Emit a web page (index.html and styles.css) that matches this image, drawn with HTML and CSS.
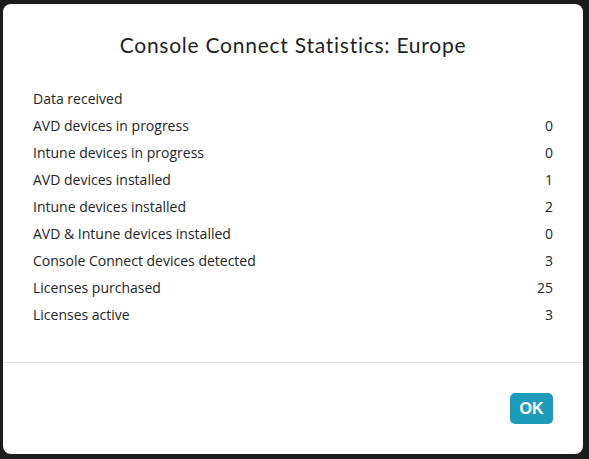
FILE: index.html
```html
<!DOCTYPE html>
<html>
<head>
<meta charset="utf-8">
<link rel="stylesheet" href="styles.css">
</head>
<body>
<div class="modal">
  <div class="modal-header">
    <h1 class="modal-title">Console Connect Statistics: Europe</h1>
  </div>
  <div class="modal-body">
    <div class="row"><span>Data received</span><span></span></div>
    <div class="row"><span>AVD devices in progress</span><span>0</span></div>
    <div class="row"><span>Intune devices in progress</span><span>0</span></div>
    <div class="row"><span>AVD devices installed</span><span>1</span></div>
    <div class="row"><span>Intune devices installed</span><span>2</span></div>
    <div class="row"><span>AVD &amp; Intune devices installed</span><span>0</span></div>
    <div class="row"><span>Console Connect devices detected</span><span>3</span></div>
    <div class="row"><span>Licenses purchased</span><span>25</span></div>
    <div class="row"><span>Licenses active</span><span>3</span></div>
  </div>
  <div class="modal-footer">
    <button class="btn-ok">OK</button>
  </div>
</div>
</body>
</html>
```
FILE: styles.css
```css
html, body {
  margin: 0;
  padding: 0;
  background: #1c1c1c;
  height: 100%;
}
body {
  padding: 4px 6px 5px 3px;
  box-sizing: border-box;
}
.modal {
  width: 580px;
  height: 450px;
  background: #ffffff;
  border-radius: 8px;
  display: flex;
  flex-direction: column;
  font-family: "Open Sans", "Liberation Sans", sans-serif;
  color: #212529;
}
.modal-header {
  padding: 26px 20px 0;
}
.modal-title {
  margin: 0;
  text-align: center;
  font-family: "Lato", "Open Sans", sans-serif;
  font-weight: 400;
  font-size: 21px;
  letter-spacing: 0.75px;
  line-height: 30px;
  color: #1f1f1f;
}
.modal-body {
  padding: 25px 30px 0;
  flex: 0 0 auto;
}
.row {
  display: flex;
  justify-content: space-between;
  font-size: 14px;
  line-height: 27px;
}
.modal-footer {
  margin-top: auto;
  border-top: 1px solid #e5e9ee;
  padding: 30px 30px 30px;
  display: flex;
  justify-content: flex-end;
}
.btn-ok {
  width: 43px;
  height: 31px;
  border: none;
  border-radius: 5px;
  background: #1e9bb8;
  color: #ffffff;
  font-family: "Liberation Sans", Arial, sans-serif;
  font-weight: 700;
  font-size: 16px;
  padding: 0;
}
```
